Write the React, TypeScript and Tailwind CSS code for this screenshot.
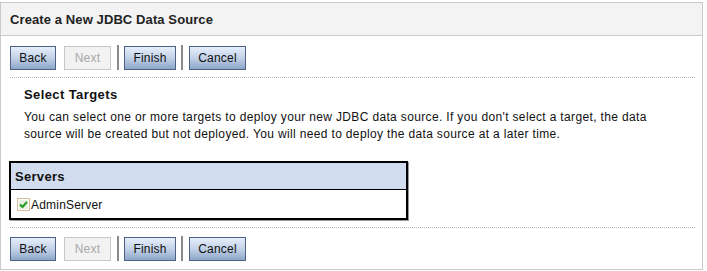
import React from 'react';

const font = { fontFamily: 'Tahoma, "Liberation Sans", Arial, sans-serif' };

function WizardButton({ label, width, disabled }: { label: string; width: string; disabled?: boolean }) {
  return (
    <button
      disabled={disabled}
      className={`${width} h-[24px] text-[12px] leading-none border tracking-[0.2px] ${
        disabled
          ? 'border-[#c8c8c8] bg-[#f2f2f2] text-[#a8a8a8]'
          : 'border-[#4d6185] bg-gradient-to-b from-[#e6eefa] via-[#c3d2e8] to-[#8ea6c8] text-[#111]'
      }`}
    >
      {label}
    </button>
  );
}

function ButtonBar() {
  return (
    <div className="flex items-center h-[25px]">
      <WizardButton label="Back" width="w-[46px]" />
      <div className="ml-[8px]">
        <WizardButton label="Next" width="w-[47px]" disabled />
      </div>
      <div className="w-[2px] h-[25px] bg-[#8a8a8a] ml-[6px] mr-[5px]" />
      <WizardButton label="Finish" width="w-[52px]" />
      <div className="w-[2px] h-[25px] bg-[#8a8a8a] ml-[5px] mr-[6px]" />
      <WizardButton label="Cancel" width="w-[57px]" />
    </div>
  );
}

function CheckIcon() {
  return (
    <svg width="13" height="13" viewBox="0 0 13 13" className="shrink-0">
      <rect x="0.5" y="0.5" width="12" height="12" fill="#fff" stroke="#b07a3a" strokeDasharray="1 1" />
      <rect x="2" y="2" width="9" height="9" fill="#e8efe0" />
      <path d="M3 6.5 L5.5 9 L10 3.8" fill="none" stroke="#1e9a1e" strokeWidth="2" />
    </svg>
  );
}

export default function App() {
  return (
    <div className="w-[707px] h-[271px] bg-white pt-[2px]" style={font}>
      <div className="w-[703px] h-[268px] border border-[#c9c9c9] flex flex-col">
        <div className="h-[33px] bg-[#f3f3f3] border-b border-[#cacaca] flex items-center pl-[9px] pt-px">
          <h1 className="text-[13px] font-bold text-[#222] tracking-[0.1px]">Create a New JDBC Data Source</h1>
        </div>

        <div className="pl-[9px] pr-[7px] pt-[9px]">
          <ButtonBar />
          <div className="mt-[7px] border-b border-dotted border-[#b8b8b8]" />

          <div className="pl-[14px] pt-[7px]">
            <h2 className="text-[13px] font-bold text-[#111] leading-[20px] tracking-[0.4px]">Select Targets</h2>
            <p className="text-[12px] text-[#111] leading-[17px] mt-[4px] pr-[20px] tracking-[0.35px]">
              You can select one or more targets to deploy your new JDBC data source. If you don't select a target, the data source will be created but not deployed. You will need to deploy the data source at a later time.
            </p>
          </div>

          <div className="mt-[18px] -ml-px w-[399px] border-2 border-black shadow-[1px_1px_0_#9a9a9a]">
            <div className="h-[27px] bg-[#d1ddef] border-b border-black flex items-center pl-[4px] pt-px">
              <span className="text-[13px] font-bold text-[#111] tracking-[0.3px]">Servers</span>
            </div>
            <div className="h-[28px] flex items-center pl-[6px] pt-px">
              <CheckIcon />
              <span className="text-[12px] text-[#111] ml-px tracking-[0.2px]">AdminServer</span>
            </div>
          </div>

          <div className="mt-[7px] border-b border-dotted border-[#b8b8b8]" />
          <div className="pt-[8px]">
            <ButtonBar />
          </div>
        </div>
      </div>
    </div>
  );
}
